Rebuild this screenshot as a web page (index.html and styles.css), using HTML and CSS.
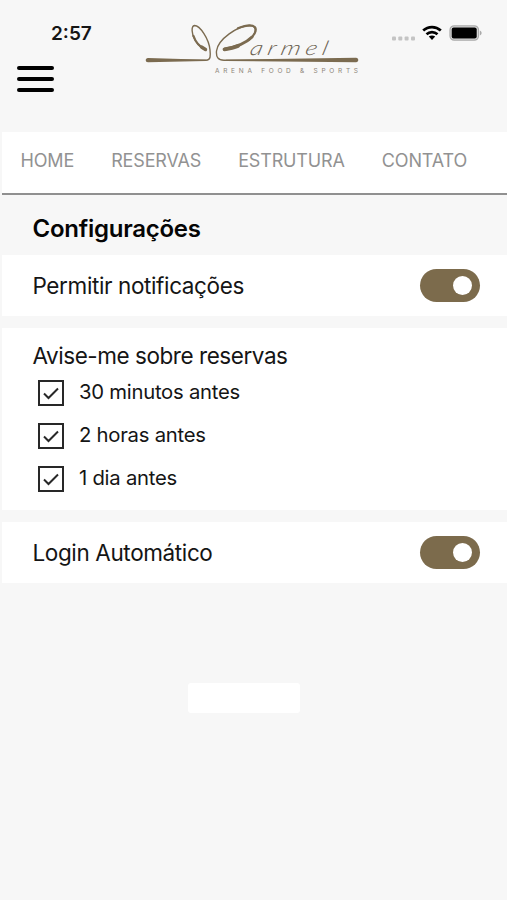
FILE: index.html
```html
<!DOCTYPE html>
<html lang="pt-BR">
<head>
    <meta charset="UTF-8">
    <meta name="viewport" content="width=device-width, initial-scale=1.0">
    <title>Configurações</title>
    <link rel="stylesheet" href="styles.css">
</head>
<body>
    <header class="header">
        <div class="left">
            <div class="time">2:57</div>
            <button class="menu" aria-label="Menu">
                <span></span>
                <span></span>
                <span></span>
            </button>
        </div>
        <svg class="logo" viewBox="0 0 225 65" width="225" height="65">
            <g fill="none" stroke="#7b6b50" stroke-linecap="round">
                <path stroke-width="1.4" d="M30 45.3H66C71 45.3 70.500 40 70 35C69 24 60 10.500 54.500 10.500C51 11 51.500 19 55 25C58 30 61 33 65 34.500"/>
                <path stroke-width="2.200" d="M53.500 21C55.500 27 60 32 65.500 34.500"/>
                <path stroke-width="3.400" d="M61.500 32L65.500 34.500"/>
                <path stroke-width="1.400" d="M150 45.300H84C78 45.300 76 42 76.500 36C78 24 98 11 109 10.500C117 10.500 117 17 111 23"/>
                <path stroke-width="2.200" d="M98 13.300C105 10.500 112 9.500 114.800 12C117.500 15 114 21 109 25"/>
                <path stroke-width="3" d="M112 22C105 29 94 32.500 84.500 34.300"/>
                <path stroke-width="3.800" d="M98 31C94 32.700 89 33.700 84.500 34.300"/>
            </g>
            <path fill="#7b6b50" d="M8 42.900L66 44.700V46L8 47.200C5 47.200 5 42.900 8 42.900Z"/>
            <path fill="#7b6b50" d="M216 42.700L86 44.700V46L216 47.200C219 47.200 219 42.700 216 42.700Z"/>
            <text class="logo-name" transform="translate(109 40.300) skewX(-14) scale(1.250 1)">armel</text>
            <text class="logo-sub" x="75" y="58" textLength="143">ARENA FOOD &amp; SPORTS</text>
        </svg>
        <div class="status">
            <svg class="dots" width="23" height="5" viewBox="0 0 23 5" fill="#c4c4c4">
                <rect x="0" y="0.500" width="4" height="4" rx="1"/>
                <rect x="6.300" y="0.500" width="4" height="4" rx="1"/>
                <rect x="12.600" y="0.500" width="4" height="4" rx="1"/>
                <rect x="19" y="0.500" width="4" height="4" rx="1"/>
            </svg>
            <svg width="20" height="16" viewBox="0 0 20 16">
                <g fill="none" stroke="#000" stroke-width="2.700">
                    <path d="M1.200 5.600C6.200 .900 13.800 .900 18.800 5.600"/>
                    <path d="M4.500 9.200C7.700 6.300 12.300 6.300 15.500 9.200"/>
                </g>
                <path d="M6.800 11.600C8.700 10 11.300 10 13.200 11.600L10 15Z"/>
            </svg>
            <svg width="33" height="16" viewBox="0 0 33 16">
                <rect x="1" y="0.800" width="28.500" height="14.400" rx="4.200" fill="#ddd" stroke="#aaa" stroke-width="1.200"/>
                <rect x="2.700" y="2.600" width="25" height="10.800" rx="2"/>
                <path fill="#aaa" d="M30.800 5.500C33.200 6.500 33.200 9.500 30.800 10.500Z"/>
            </svg>
        </div>
    </header>

    <nav class="nav">
        <a>HOME</a>
        <a>RESERVAS</a>
        <a>ESTRUTURA</a>
        <a>CONTATO</a>
    </nav>

    <main>
        <h1>Configurações</h1>
        <section class="card row">
            <span>Permitir notificações</span>
            <span class="switch"></span>
        </section>
        <section class="card reminders">
            <h2>Avise-me sobre reservas</h2>
            <div class="option">
                <svg width="26" height="26" viewBox="0 0 26 26"><rect x="1" y="1" width="24" height="24"/><path d="M6 13.500L10.500 18L20 8.500"/></svg>
                <span>30 minutos antes</span>
            </div>
            <div class="option">
                <svg width="26" height="26" viewBox="0 0 26 26"><rect x="1" y="1" width="24" height="24"/><path d="M6 13.500L10.500 18L20 8.500"/></svg>
                <span>2 horas antes</span>
            </div>
            <div class="option">
                <svg width="26" height="26" viewBox="0 0 26 26"><rect x="1" y="1" width="24" height="24"/><path d="M6 13.500L10.500 18L20 8.500"/></svg>
                <span>1 dia antes</span>
            </div>
        </section>
        <section class="card row">
            <span>Login Automático</span>
            <span class="switch"></span>
        </section>
        <div class="blank-button"></div>
    </main>
</body>
</html>
```
FILE: styles.css
```css
body {
    font-family: Inter, 'Liberation Sans', sans-serif;
    margin: 0;
    min-height: 900px;
    background-color: #f7f7f7;
    color: #151515;
}
.header {
    display: flex;
    height: 132px;
    box-sizing: border-box;
    padding-top: 15px;
}
.left {
    width: 140px;
}
.time {
    margin: 7px 0 0 51px;
    font-size: 19px;
    line-height: 24px;
    font-weight: 600;
}
.menu {
    display: flex;
    flex-direction: column;
    gap: 7px;
    margin: 20px 0 0 17px;
    padding: 0;
    border: none;
    background: none;
}
.menu span {
    width: 37px;
    height: 4px;
    border-radius: 2px;
    background: #000;
}
.logo {
    flex: none;
}
.logo-name {
    font-family: Lato, sans-serif;
    font-size: 20px;
    font-weight: 300;
    font-style: italic;
    letter-spacing: 4px;
    fill: #6d6353;
}
.logo-sub {
    font-size: 6.5px;
    fill: #8d8577;
}
.status {
    display: flex;
    gap: 7px;
    margin: 10px 0 0 27px;
    height: 16px;
}
.dots {
    margin-top: 11px;
}
.nav {
    display: flex;
    gap: 37px;
    height: 61px;
    margin-left: 2px;
    padding-left: 18.5px;
    background: white;
    border-bottom: 2px solid #909090;
    line-height: 57px;
    font-size: 18px;
    letter-spacing: -0.15px;
    color: #929292;
}
h1 {
    margin: 0;
    padding-left: 32.5px;
    height: 60px;
    line-height: 68px;
    font-size: 24px;
    font-weight: 600;
    letter-spacing: -0.25px;
    color: #050505;
}
.card {
    margin: 0 0 12px 2px;
    background: white;
    font-size: 22.5px;
    letter-spacing: -0.38px;
}
.row {
    display: flex;
    align-items: center;
    justify-content: space-between;
    height: 61px;
    padding: 0 27.5px 0 30.5px;
}
.switch {
    display: flex;
    justify-content: flex-end;
    width: 60px;
    height: 33px;
    box-sizing: border-box;
    padding: 7px 8px;
    border-radius: 17px;
    background: #7c6b4c;
}
.switch::after {
    content: "";
    width: 19px;
    height: 19px;
    border-radius: 50%;
    background: white;
}
.reminders {
    height: 182px;
    box-sizing: border-box;
    padding: 11px 0 0 30.5px;
}
h2 {
    margin: 0 0 7px;
    font-size: 22.5px;
    line-height: 33px;
    font-weight: 400;
    letter-spacing: -0.45px;
}
.option {
    display: flex;
    gap: 15.5px;
    height: 43px;
    padding-left: 5px;
    font-size: 20.3px;
    line-height: 26px;
    letter-spacing: -0.25px;
}
.option svg {
    margin-top: 1px;
    fill: none;
    stroke: #282828;
    stroke-width: 2;
}
.blank-button {
    width: 112px;
    height: 30px;
    margin: 100px 0 0 188px;
    border-radius: 3px;
    background: white;
}
```
